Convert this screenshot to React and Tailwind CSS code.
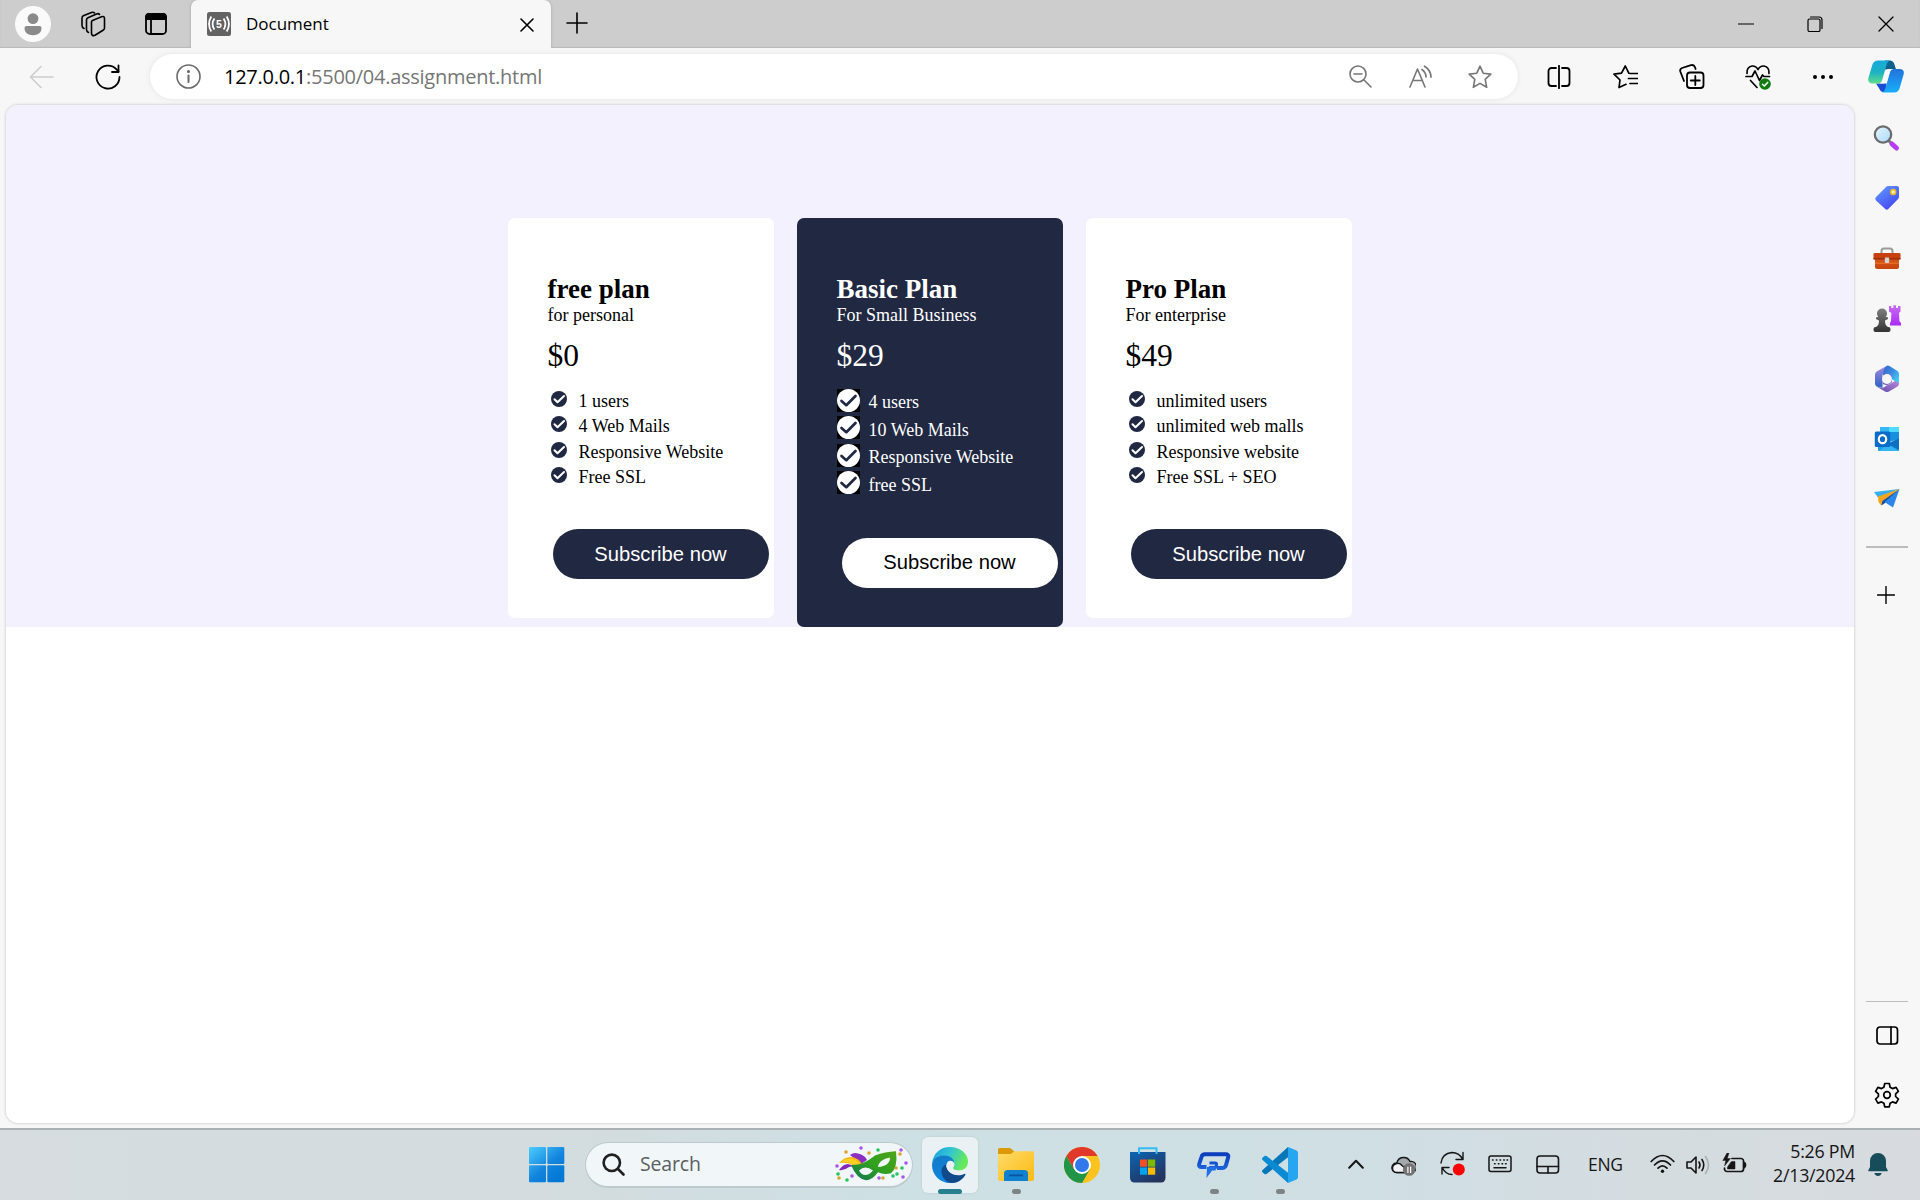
import React from "react";

const UI = "font-['Open_Sans','Noto_Sans',sans-serif]";

function Svg({ w = 24, h = 24, vb, children, className = "", sw = 1.6 }) {
  return (
    <svg width={w} height={h} viewBox={vb || `0 0 ${w} ${h}`} fill="none" stroke="currentColor" strokeWidth={sw} strokeLinecap="round" strokeLinejoin="round" className={"shrink-0 " + className}>
      {children}
    </svg>
  );
}

/* ---------- Title bar ---------- */

function TitleBar() {
  return (
    <div className="flex h-12 shrink-0 items-start bg-[#cdcdcd] shadow-[inset_0_-1px_1px_#b9b9b9]">
      <div className="flex h-12 w-[191px] shrink-0 items-center pl-[15px]">
        <svg width="36" height="36" viewBox="0 0 36 36" className="shrink-0">
          <circle cx="18" cy="18" r="18" fill="#fafafa" />
          <circle cx="18" cy="12.6" r="5.4" fill="#8a8a8a" />
          <path d="M9.500 22a2 2 0 0 1 2-2h13a2 2 0 0 1 2 2c0 5-4 7.200-8.500 7.200S9.500 27 9.500 22z" fill="#8a8a8a" />
        </svg>
        <Svg w={26} h={26} className="ml-[29px]" sw={1.600}>
          <path d="M12.500 9.500 21.500 5.800Q24.500 4.800 24.500 7.500V17Q24.500 18.500 23 19.300L15 24.300Q12 25.500 11.500 22.500V11Q11.500 10 12.500 9.500z" />
          <path d="M8.500 21.500Q6.500 20.500 6.500 18.500V9Q6.500 7.500 8 6.800L16.500 3Q18.500 2 19.500 3.500" />
          <path d="M4 17.500Q2 16.500 2 14.500V7Q2 5.500 3.300 4.800L11.500 1.500Q13.500 .7 14.500 2" />
        </Svg>
        <Svg w={22} h={22} className="ml-[39px]" sw={1.800}>
          <rect x="1" y="1" width="20" height="20" rx="3.500" />
          <path d="M1 6V4a3 3 0 0 1 3-3h14a3 3 0 0 1 3 3v2z" fill="currentColor" />
          <path d="M6 6v15" />
        </Svg>
      </div>
      <div className="flex h-12 w-[360px] shrink-0 items-center rounded-t-[7px] bg-[#f7f7f7] pl-4 shadow-[0_0_3px_#a5a5a5] [clip-path:inset(0_-4px_0_-4px)]">
        <svg width="24" height="24" viewBox="0 0 24 24" className="shrink-0">
          <rect width="24" height="24" rx="2.500" fill="#636363" />
          <g fill="none" stroke="#fff" strokeWidth="1.800">
            <path d="M4.300 4.500Q-.2 12 4.300 19.500M19.700 4.500Q24.200 12 19.700 19.500" />
            <path d="M7.400 6.500Q3.800 12 7.400 17.500M16.600 6.500Q20.200 12 16.600 17.500" />
          </g>
          <text x="12" y="15.500" textAnchor="middle" fontFamily="Liberation Sans" fontWeight="700" fontSize="10.500" fill="#fff">5</text>
        </svg>
        <span className={`${UI} ml-[15px] w-[274px] text-[17px] tracking-[-0.02px] text-black`}>Document</span>
        <Svg w={14} h={14} className="mt-0.5" sw={1.600}><path d="M1 1l12 12M13 1 1 13" /></Svg>
      </div>
      <Svg w={22} h={22} className="mt-3 ml-[15px]" sw={1.600}><path d="M11 1v20M1 11h20" /></Svg>
      <div className="ml-auto flex h-12 items-center gap-[53px] pr-[26px]">
        <Svg w={16} h={16} sw={1.200}><path d="M.5 8h15" /></Svg>
        <Svg w={16} h={16} sw={1.200}>
          <rect x="1" y="3" width="12" height="12.500" rx="1.500" />
          <path d="M3.500 1H12a3 3 0 0 1 3 3v8.500" />
        </Svg>
        <Svg w={16} h={16} className="ml-[2px]" sw={1.300}><path d="M1 1l14 14M15 1 1 15" /></Svg>
      </div>
    </div>
  );
}

/* ---------- Address bar ---------- */

function StarIcon({ className }) {
  return (
    <Svg w={24} h={24} className={className} sw={1.600}>
      <path d="M12 1.200l3.200 7 7.600.9-5.600 5.200 1.500 8-6.700-3.900-6.700 3.900 1.500-8L1.200 9.100l7.600-.9z" />
    </Svg>
  );
}

function Copilot() {
  return (
    <svg width="36" height="33" viewBox="0 0 36 33" className="shrink-0">
      <defs>
        <linearGradient id="cpA" x1="0" y1="0" x2="0" y2="1"><stop offset="0" stopColor="#17a9dc" /><stop offset=".5" stopColor="#1cb2c4" /><stop offset="1" stopColor="#5fdc8a" /></linearGradient>
        <linearGradient id="cpB" x1="0" y1="0" x2="0" y2="1"><stop offset="0" stopColor="#2373da" /><stop offset="1" stopColor="#18aefb" /></linearGradient>
      </defs>
      <path d="M17 .5h4.500q3.800 0 5 4l1.500 5H17z" fill="#0d5f8c" />
      <path d="M8 23.500h10.500l-1 8.500h-2q-3 0-4-3z" fill="#1b4cd8" />
      <path d="M10 .5h12.500q-3 .3-4 4.500l-4.300 15q-1 3.500-4.500 3.500H4.500Q-.8 23.500.4 18L4.300 5Q5.700.5 10 .5z" fill="url(#cpA)" />
      <path d="M26 9h5.500q5.300 0 4.100 5.500L31.700 28q-1.400 4.500-5.700 4.500H13.500q3-.3 4-4.500l4.300-15.500Q22.600 9 26 9z" fill="url(#cpB)" />
      <path d="M20 9h5q-2.500.5-3.300 3.500l-2.300 8q-.8 3-4 3h-3.500q2-.5 2.800-3.500l2.400-8Q17.900 9 20 9z" fill="#f7f9fb" />
    </svg>
  );
}

function AddressBar() {
  return (
    <div className="flex h-14 shrink-0 items-center pt-px pl-[29px]">
      <Svg w={25} h={24} className="text-[#cdcdcd]" sw={1.600}><path d="M24 12H1.500M12 1.500 1.500 12 12 22.500" /></Svg>
      <Svg w={26} h={26} className="ml-[41px]" sw={1.800}>
        <path d="M24.500 13A11.500 11.500 0 1 1 21.500 5.300L23.500 7.500" /><path d="M23.500 1.500v6.500H17" />
      </Svg>
      <div className="ml-[29px] flex h-[45px] w-[1368px] shrink-0 items-center rounded-full bg-white pl-[26px] shadow-[0_0_5px_#e2e2e2]">
        <Svg w={25} h={25} className="text-[#6b6b6b]" sw={1.600}>
          <circle cx="12.500" cy="12.500" r="11.500" /><path d="M12.500 11.500v6.500" strokeWidth="2" /><circle cx="12.500" cy="7.500" r=".8" fill="currentColor" />
        </Svg>
        <span className={`${UI} ml-[23px] whitespace-nowrap text-[20px] tracking-[-0.260px] text-[#767676]`}>
          <span className="text-black">127.0.0.1</span>:5500/04.assignment.html
        </span>
        <div className="ml-auto flex items-center pr-[26px] text-[#767676]">
          <Svg w={23} h={23} sw={1.600}><circle cx="9" cy="9" r="8" /><path d="M5 9h8M15 15l7 7" /></Svg>
          <Svg w={24} h={24} className="ml-[37px]" sw={1.600}>
            <path d="M1 22 8.500 4 16 22M3.800 15.500h9.500M13 4.500q4 3 4 7.500M15.500 1.200q6.500 4 6.500 11" />
          </Svg>
          <StarIcon className="ml-[35px]" />
        </div>
      </div>
      <div className="ml-[29px] flex items-center text-black">
        <Svg w={24} h={24} sw={1.800}><path d="M9 3H4.500A3 3 0 0 0 1.500 6v12a3 3 0 0 0 3 3H9M15 3h4.500a3 3 0 0 1 3 3v12a3 3 0 0 1-3 3H15M12 .8v22.400" /></Svg>
        <Svg w={25} h={24} className="ml-[42px]" sw={1.700}>
          <path d="M13 19.300 6 22.500l1-7.500L1 9.200l7.500-1L12.300 1l3.500 7.200M17 8.500h7.500M15.500 13.500h9M17 18.500h7.500" />
        </Svg>
        <Svg w={26} h={25} className="ml-[41px]" sw={1.800}>
          <rect x="8" y="8.500" width="16.500" height="15.500" rx="3" /><path d="M16.300 12v9M11.800 16.500h9" />
          <path d="M5 17 1.300 7.500Q.6 5 3 4L12 1.200q3-.8 4 2l.6 1.800" />
        </Svg>
        <Svg w={26} h={26} className="ml-[40px]" sw={1.700}>
          <path d="M2 9.500Q1.500 3 7 2q4-.3 6 3.500Q15 1.700 19 2q5.500 1 5 7.500M1 12.500h6l3-5.500 4.500 9.500 3-5.500 1.500 1.500h5.500M5.500 16.500l6.500 7" />
          <circle cx="20" cy="20" r="5.800" fill="#107c10" stroke="none" /><path d="m17.500 20.200 1.800 1.800 3.400-3.600" stroke="#fff" strokeWidth="1.500" />
        </Svg>
        <Svg w={22} h={6} className="ml-[41px]" sw={0}><g fill="currentColor"><circle cx="3" cy="3" r="2" /><circle cx="11" cy="3" r="2" /><circle cx="19" cy="3" r="2" /></g></Svg>
        <div className="ml-[34px]"><Copilot /></div>
      </div>
    </div>
  );
}

/* ---------- Pricing page ---------- */

const plans = [
  { name: "free plan", sub: "for personal", price: "$0", items: ["1 users", "4 Web Mails", "Responsive Website", "Free SSL"] },
  { name: "Basic Plan", sub: "For Small Business", price: "$29", items: ["4 users", "10 Web Mails", "Responsive Website", "free SSL"], dark: true },
  { name: "Pro Plan", sub: "For enterprise", price: "$49", items: ["unlimited users", "unlimited web malls", "Responsive website", "Free SSL + SEO"] },
];

function Check({ dark }) {
  if (dark)
    return (
      <svg width="23" height="23" viewBox="0 0 23 23" className="mt-[-3px] mr-[9px] shrink-0">
        <rect width="23" height="23" fill="#000" />
        <circle cx="11.500" cy="11.500" r="11.500" fill="#fff" />
        <path d="m4.500 12 4.800 4.200L18.500 7" fill="none" stroke="#212842" strokeWidth="2.700" strokeLinecap="round" strokeLinejoin="round" />
      </svg>
    );
  return (
    <svg width="16" height="16" viewBox="0 0 16 16" className="mt-[-5px] mr-3 ml-[3px] shrink-0">
      <circle cx="8" cy="8" r="8" fill="#212842" />
      <path d="m3.500 8.300 3 2.900L13 5" fill="none" stroke="#fff" strokeWidth="2.100" strokeLinecap="round" strokeLinejoin="round" />
    </svg>
  );
}

function Card({ plan }) {
  const d = plan.dark;
  return (
    <div className={`w-[266px] rounded-[7px] pt-[56px] pl-[39.500px] ${d ? "h-[409px] bg-[#212842] text-white" : "h-[400px] bg-white text-black"}`}>
      <h2 className="text-[27px] leading-[30px] font-bold">{plan.name}</h2>
      <p className="mt-px text-[18px] leading-[20px]">{plan.sub}</p>
      <p className="mt-[13px] text-[31.500px] leading-[36px]">{plan.price}</p>
      <ul className={d ? "mt-[14px]" : "mt-[15px]"}>
        {plan.items.map((t) => (
          <li key={t} className={`flex items-center text-[18px] whitespace-nowrap ${d ? "h-[27.500px]" : "h-[25.300px]"}`}>
            <Check dark={d} />
            <span className={d ? "mt-[2px]" : ""}>{t}</span>
          </li>
        ))}
      </ul>
      <button className={`ml-[5px] h-[50px] w-[216px] rounded-full font-['Liberation_Sans',Arial,sans-serif] text-[20.200px] ${d ? "mt-[40px] bg-white pb-[2px] text-black" : "mt-[39px] bg-[#212842] text-white"}`}>
        Subscribe now
      </button>
    </div>
  );
}

function Page() {
  return (
    <main className="h-[1018px] w-[1848px] overflow-hidden rounded-[12px] bg-white font-['Liberation_Serif','Times_New_Roman',serif] shadow-[0_0_3px_#b8b8b8]">
      <section className="flex h-[522px] items-start justify-center gap-[23px] bg-[#f3f1fe] pt-[113px]">
        {plans.map((p) => <Card key={p.name} plan={p} />)}
      </section>
    </main>
  );
}

/* ---------- Side bar ---------- */

function SearchColor() {
  return (
    <svg width="28" height="28" viewBox="0 0 28 28">
      <defs><linearGradient id="sg" x1="0" y1="0" x2="1" y2="1"><stop offset="0" stopColor="#e6f5fe" /><stop offset="1" stopColor="#a9dafa" /></linearGradient></defs>
      <path d="m15 16 3 3" stroke="#777" strokeWidth="3" />
      <path d="m19 20 4.500 4" stroke="#b53ff0" strokeWidth="5" strokeLinecap="round" />
      <circle cx="10" cy="10.500" r="8.200" fill="url(#sg)" stroke="#6b6b6b" strokeWidth="2.300" />
    </svg>
  );
}
function TagIcon() {
  return (
    <svg width="28" height="28" viewBox="0 0 28 28">
      <defs><linearGradient id="tg" x1="0" y1="0" x2=".7" y2="1"><stop offset="0" stopColor="#62a0fc" /><stop offset="1" stopColor="#4446f5" /></linearGradient></defs>
      <path d="M15 2h9a2 2 0 0 1 2 2v9a3 3 0 0 1-.9 2L15.500 24.800a2.500 2.500 0 0 1-3.500 0L3 16.500a2.500 2.500 0 0 1 0-3.500L13 2.900a3 3 0 0 1 2-.9z" fill="url(#tg)" />
      <circle cx="20.200" cy="8" r="2.400" fill="#f3f0e5" stroke="#f3bd13" strokeWidth="1.600" />
    </svg>
  );
}
function ToolboxIcon() {
  return (
    <svg width="28" height="24" viewBox="0 0 28 24">
      <defs><linearGradient id="bx" x1="0" y1="0" x2="0" y2="1"><stop offset="0" stopColor="#d8571a" /><stop offset="1" stopColor="#c7430f" /></linearGradient></defs>
      <path d="M8.500 8V5q0-2.500 2.500-2.500h6q2.500 0 2.500 2.500v3" fill="none" stroke="#9b9b9b" strokeWidth="2" />
      <path d="M2 12h24v9a2 2 0 0 1-2 2H4a2 2 0 0 1-2-2z" fill="url(#bx)" />
      <path d="M2 16.500h24v1.500H2z" fill="#e66a28" />
      <rect x=".5" y="7" width="27" height="6.500" rx="1.300" fill="#c8400f" /><rect x=".5" y="12" width="27" height="1.500" fill="#98310c" />
      <rect x="11.800" y="11.500" width="4.400" height="5.500" rx="1.200" fill="#d4d4d4" />
    </svg>
  );
}
function GamesIcon() {
  return (
    <svg width="28" height="28" viewBox="0 0 28 28">
      <defs>
        <linearGradient id="rk" x1="0" y1="0" x2="0" y2="1"><stop offset="0" stopColor="#c96bf6" /><stop offset="1" stopColor="#a92cf3" /></linearGradient>
        <linearGradient id="pw" gradientUnits="userSpaceOnUse" x1="0" y1="3" x2="0" y2="28"><stop offset="0" stopColor="#808080" /><stop offset="1" stopColor="#303030" /></linearGradient>
      </defs>
      <path d="M16 1h2.300v2h2V.3h2.700V3h2V1h2.500v5.500L26 8l.4 8 1.600 2v2.500H17V18l1-2 .4-8-2.400-1.500z" fill="url(#rk)" />
      <g fill="url(#pw)"><circle cx="9" cy="8.500" r="5" /><path d="M3 12.500q6-2.500 12 0v1.500l-3 1.500q0 5 3 6.500v1H3v-1q3-1.500 3-6.500L3 14z" /><rect x=".5" y="22" width="17" height="5" rx="2" /></g>
    </svg>
  );
}
function M365Icon() {
  return (
    <svg width="26" height="28" viewBox="0 0 26 28">
      <defs>
        <linearGradient id="mA" x1="0" y1="0" x2="1" y2=".8"><stop offset="0" stopColor="#3466c8" /><stop offset=".5" stopColor="#3a8ae0" /><stop offset="1" stopColor="#45cdf5" /></linearGradient>
        <linearGradient id="mB" x1="0" y1="0" x2="0" y2="1"><stop offset="0" stopColor="#a98be0" /><stop offset=".6" stopColor="#5b72d0" /><stop offset="1" stopColor="#2a63c4" /></linearGradient>
        <linearGradient id="mC" x1="1" y1="0" x2="0" y2="1"><stop offset="0" stopColor="#c28bdc" /><stop offset="1" stopColor="#5d49ab" /></linearGradient>
      </defs>
      <path d="M13 .8 3 6.300Q1 7.500 1 9.500v9q0 2 1.800 3L8.500 23V9.500L14 6z" fill="url(#mB)" />
      <path d="m2 21.300 9 5.200q2 1 4 0l8.500-5q1.500-1 1.500-2.700L24 14l-7 4.500-4 2-5 2.800z" fill="url(#mC)" />
      <path d="M9 10q0-7 4-9.300 1.200-.4 2.500.3L23.500 6Q25 7 25 8.800v9.500l-7.500-4.300z" fill="url(#mA)" />
      <path d="M9.500 10.500 8.500 19l4.500 1.500 5-3V10.500L13 8z" fill="#7b6ccb" />
      <circle cx="13" cy="14" r="4.900" fill="#f7f7f7" />
    </svg>
  );
}
function OutlookIcon() {
  return (
    <svg width="26" height="26" viewBox="0 0 26 26">
      <path d="M6 2a1 1 0 0 1 1-1h17a1 1 0 0 1 1 1v11H6z" fill="#28a8ea" />
      <path d="M6 1h9v5H6z" fill="#35b8f1" /><path d="M15 1h10v5H15z" fill="#50d9ff" />
      <path d="M15 6h10v7l-10 3z" fill="#1490df" />
      <path d="M4 13l11 4 10-5v12a1 1 0 0 1-1 1H5a1 1 0 0 1-1-1z" fill="#1a9ce6" />
      <path d="m14 18 11-6v12z" fill="#0f6fc0" /><path d="m13 18 12 7H5z" fill="#34b4f0" />
      <rect x=".8" y="5.500" width="15.500" height="15.500" rx="1.500" fill="#0a6cc8" />
      <ellipse cx="8.500" cy="13.200" rx="3.700" ry="4" fill="none" stroke="#fff" strokeWidth="2.200" />
    </svg>
  );
}
function PlaneIcon() {
  return (
    <svg width="28" height="24" viewBox="0 0 28 24">
      <path d="M1 5 26.500 2 5 10.500z" fill="#36b0f0" />
      <path d="M5 9.500 26.500 2 8 18.500 5.500 15z" fill="#f3a51f" />
      <path d="M8.500 18.500 9.500 14 26.500 2 12 16z" fill="#0c4fa8" />
      <path d="M26.500 2 20 20.500 11.500 15z" fill="#2c86ec" />
    </svg>
  );
}

function SideSlot({ children }) {
  return <div className="flex h-[60.200px] shrink-0 items-center justify-center">{children}</div>;
}

function SideBar() {
  return (
    <aside className="flex h-[1023px] w-[66px] flex-col pt-[3px] text-black">
      <SideSlot><SearchColor /></SideSlot>
      <SideSlot><TagIcon /></SideSlot>
      <SideSlot><ToolboxIcon /></SideSlot>
      <SideSlot><GamesIcon /></SideSlot>
      <SideSlot><M365Icon /></SideSlot>
      <SideSlot><OutlookIcon /></SideSlot>
      <SideSlot><PlaneIcon /></SideSlot>
      <div className="mt-[17px] ml-3 h-[2px] w-[42px] shrink-0 bg-[#bdbdbd]" />
      <Svg w={18} h={18} className="mt-[38px] ml-[23px]" sw={1.400}><path d="M9 .5v17M.5 9h17" /></Svg>
      <div className="mt-auto ml-3 h-px w-[42px] bg-[#bdbdbd]" />
      <Svg w={23} h={19} className="mt-[24px] ml-[22px]" sw={1.700}><rect x="1" y="1" width="20.500" height="17" rx="3" /><path d="M15 1v17" /></Svg>
      <Svg w={26} h={26} className="mt-[37px] mb-[20px] ml-5" sw={1.700}>
        <circle cx="13" cy="13" r="3.300" />
        <path d="M10.700 1.500h4.600l.8 3.700 2.400 1.400 3.600-1.200 2.300 4-2.800 2.500v2.600l2.800 2.600-2.300 4-3.600-1.200-2.400 1.400-.8 3.500h-4.600l-.8-3.500-2.400-1.400-3.600 1.200-2.300-4 2.800-2.600v-2.600L1.600 9.400l2.300-4 3.600 1.200 2.400-1.400z" />
      </Svg>
    </aside>
  );
}

/* ---------- Task bar ---------- */

function WindowsIcon() {
  return (
    <svg width="36" height="36" viewBox="0 0 36 36" className="shrink-0">
      <defs><linearGradient id="wn" gradientUnits="userSpaceOnUse" x1="0" y1="0" x2="28" y2="34"><stop offset="0" stopColor="#4ccdff" /><stop offset=".6" stopColor="#1284dd" /><stop offset="1" stopColor="#0078d4" /></linearGradient></defs>
      <g fill="url(#wn)"><rect width="17" height="17" rx="1" /><rect x="18.300" width="17" height="17" rx="1" /><rect y="18.300" width="17" height="17" rx="1" /><rect x="18.300" y="18.300" width="17" height="17" rx="1" /></g>
    </svg>
  );
}

const confetti = [
  [26, 2, "#a855e8"], [11, 6, "#dba52b"], [34, 7, "#dba52b"], [43, 4, "#22c55e"], [66, 4, "#a855e8"], [65, 8, "#dba52b"], [71, 17, "#a855e8"],
  [2, 20, "#a855e8"], [3, 28, "#22c55e"], [4, 32, "#dba52b"], [12, 34, "#22c55e"], [17, 30, "#a855e8"], [44, 32, "#a855e8"], [48, 32, "#dba52b"],
  [58, 30, "#22c55e"], [62, 28, "#22c55e"], [67, 22, "#22c55e"], [61, 22, "#dba52b"], [68, 31, "#a855e8"],
];

function MaskIcon() {
  return (
    <svg width="74" height="37" viewBox="0 0 74 37" className="shrink-0">
      <defs><linearGradient id="mk" x1="0" y1="1" x2="1" y2="0"><stop offset="0" stopColor="#0e7455" /><stop offset=".5" stopColor="#2fa01f" /><stop offset="1" stopColor="#4da51b" /></linearGradient></defs>
      {confetti.map(([x, y, c], i) => <circle key={i} cx={x} cy={y} r="1.800" fill={c} />)}
      <path d="M15 9q4-3 8-1.500 7 1.500 9 6.500l-6 4z" fill="#8b2fc0" />
      <path d="M4 24q4-6 9-6l6 2-5 1q-5 4-10 3z" fill="#8428b8" />
      <path d="M4 17q5-6 12-6 8 1 11 7l-8 2Q14 16 4 17z" fill="#f8b511" />
      <path d="M13 13q6-1 10 3l3 4-7-1q-6-4-13-3 3-3 7-3z" fill="#ffcf22" />
      <path fillRule="evenodd" d="M16 19q9 0 15-3.500 4-2 9-6 10-4 21-4.300 2 16-5 22-7 2-13-1-6 8-12 8-9-1-15-15.200zm8 5.500q6-6 14 0-4 4.500-7.500 4.500-4 0-6.500-4.500zm19-3.500q1-7.500 12-9.500 0 8.500-12 9.500z" fill="url(#mk)" />
    </svg>
  );
}

function EdgeIcon() {
  return (
    <svg width="36" height="36" viewBox="0 0 36 36">
      <defs>
        <linearGradient id="e1" x1="0" y1="0" x2="1" y2=".35"><stop offset="0" stopColor="#199ce0" /><stop offset=".5" stopColor="#30c4d4" /><stop offset="1" stopColor="#66ea5b" /></linearGradient>
        <linearGradient id="e2" x1="0" y1="0" x2=".4" y2="1"><stop offset="0" stopColor="#1578c4" /><stop offset="1" stopColor="#0f86e2" /></linearGradient>
      </defs>
      <path d="M0 17C1 6 8.500 0 18 0c10 0 18 6.500 18 14.500 0 6-4.500 9-9 9-3.500 0-6-1-6-2.500 0-1 1.300-1.500 1.300-4 0-3.500-4-6.500-9-6.500C6 10.500 1 13 0 17z" fill="url(#e1)" />
      <path d="M0 18C.5 12 6 8.500 12 8.500c6 0 10.300 3.500 10.300 8C21 14 15 14 14 20c-1 7 4 15 10 15-2 .8-4 1-6 1C8 36 0 28 0 18z" fill="url(#e2)" />
      <path d="M14 17.500c-2.800 1-5 4-4.500 8C10 31 15 36 20 36c6 0 10.500-3.500 13.300-8 .4-.8-.2-1.500-1-1-2 1-4 1.300-6 1.300-7 0-12-4.500-12.300-10.800z" fill="#114a8b" />
      <path d="M18.300 13.800c2.500 0 4 1.500 4 3.600 0 2-1.300 2.600-1.300 3.700 0 1.500 2.500 2.700 6 2.700 2.500 0 4.500-.6 6-1.300-1.500 3.500-5 5-8.500 4.700-6-.6-10-4.400-10-8.800 0-2.600 1.500-4.600 3.800-4.600z" fill="#e9f1f4" />
    </svg>
  );
}
function FolderIcon() {
  return (
    <svg width="36" height="34" viewBox="0 0 36 34">
      <defs><linearGradient id="fo" x1="0" y1="0" x2="1" y2="1"><stop offset="0" stopColor="#ffdc6a" /><stop offset="1" stopColor="#fbb913" /></linearGradient></defs>
      <path d="M0 1.500A1.500 1.500 0 0 1 1.500 0h10q1 0 1.800.8L16 3.200V8H0z" fill="#dd9a08" />
      <path d="M0 6h12q1.500 0 2.500-1.200T17 3.200h17.500A1.500 1.500 0 0 1 36 4.700V31a2 2 0 0 1-2 2H2a2 2 0 0 1-2-2z" fill="url(#fo)" />
      <path d="M6 33v-7.500q0-3.500 3.500-3.500h17q3.500 0 3.500 3.500V33z" fill="#1180cf" /><rect x="11" y="26.500" width="14" height="1.800" rx=".9" fill="#0b559d" />
    </svg>
  );
}
function ChromeIcon() {
  return (
    <svg width="36" height="36" viewBox="0 0 36 36">
      <circle cx="18" cy="18" r="18" fill="#fcc31e" />
      <path d="M2.400 9A18 18 0 0 1 33.600 9H18L10.200 22.500z" fill="#e2372b" />
      <path d="M2.400 9A18 18 0 0 0 18 36l7.800-13.500L18 24l-7.800-1.500z" fill="#219547" />
      <circle cx="18" cy="18" r="9" fill="#fff" /><circle cx="18" cy="18" r="7" fill="#3078ec" />
    </svg>
  );
}
function StoreIcon() {
  return (
    <svg width="36" height="36" viewBox="0 0 36 36">
      <defs><linearGradient id="st" x1="0" y1="0" x2=".6" y2="1"><stop offset="0" stopColor="#0c65b4" /><stop offset="1" stopColor="#24345f" /></linearGradient></defs>
      <path d="M0 5h35.500v26a4.500 4.500 0 0 1-4.500 4.500H4.500A4.500 4.500 0 0 1 0 31z" fill="url(#st)" />
      <path d="M9 7V1.200h17.500V7" fill="none" stroke="#32bdf2" strokeWidth="2" strokeLinejoin="round" />
      <path fill="#f25022" d="M10 12.500h7.200v7.200H10z" /><path fill="#7fba00" d="M18 12.500h7.200v7.200H18z" /><path fill="#00a4ef" d="M10 20.500h7.200v7.200H10z" /><path fill="#ffb900" d="M18 20.500h7.200v7.200H18z" />
    </svg>
  );
}
function ChatPIcon() {
  return (
    <svg width="36" height="28" viewBox="0 0 36 28">
      <defs><linearGradient id="cp" gradientUnits="userSpaceOnUse" x1="0" y1="0" x2="0" y2="27"><stop offset="0" stopColor="#0a36b8" /><stop offset=".4" stopColor="#1250cc" /><stop offset="1" stopColor="#2a7df0" /></linearGradient></defs>
      <g fill="none" stroke="url(#cp)" strokeLinejoin="round">
        <path d="M10.500 16H5.500q-3 0-2.300-3L5.500 6Q6.300 3.300 9 3.300h20.500q3.500 0 2.700 3L30 14q-.8 3-4 3h-5" strokeWidth="4" />
        <path d="M13.500 12h5.500q2 0 1.500 2l-.8 2.500H14l-1.500 6" strokeWidth="3" />
      </g>
      <path d="M11 16h9.500l-1 3.500h-3.500L10.500 27z" fill="#2270e6" />
    </svg>
  );
}
function VsCodeIcon() {
  return (
    <svg width="36" height="36" viewBox="0 0 36 36">
      <path d="M26 0 .3 23.300q-.6 1 .2 1.900l2 1.700q1 .6 2 0L27 9.500z" fill="#0877b9" />
      <path d="M26 36 .3 12.700q-.6-1 .2-1.900l2-1.700q1-.6 2 0L27 26.500z" fill="#0a8ad2" />
      <path d="M26 0l8.500 3.600Q36 4.300 36 6v24q0 1.600-1.500 2.400L26 36z" fill="#26a5f1" />
    </svg>
  );
}

function AppSlot({ children, active, running }) {
  return (
    <div className={`relative flex h-14 w-14 shrink-0 items-center justify-center rounded-[6px] ${active ? "bg-[#e9f1f4] shadow-[0_0_2px_#b3c2c6]" : ""}`}>
      {children}
      {active && <span className="absolute bottom-[-1px] h-[5px] w-6 rounded-full bg-[#26808f]" />}
      {running && <span className="absolute bottom-[-1px] h-[5px] w-[9px] rounded-full bg-[#7c8486]" />}
    </div>
  );
}

function Tray() {
  return (
    <div className="ml-auto flex items-center pr-8 text-[#151515]">
      <Svg w={16} h={10} className="mt-[-2px]" sw={2}><path d="m1.200 8.800 6.800-7 6.800 7" /></Svg>
      <Svg w={25} h={22} className="ml-[27px]" sw={1.400}>
        <path d="M5.500 18.500a4.700 4.700 0 0 1 .3-9.500A7 7 0 0 1 19 7.500a5.500 5.500 0 0 1 4 10L17 18.500z" fill="#a5a9ab" />
        <path d="M5.500 18.500Q1.500 18 1.500 14q.5-4 4.500-4.500 3-.5 5 2l8 7z" fill="#f1f3f4" />
        <circle cx="18.200" cy="15.500" r="6.300" fill="#737373" stroke="none" /><path d="M16.900 13v5.400M19.600 13v5.400" stroke="#fff" strokeWidth="1.200" />
      </Svg>
      <Svg w={25} h={25} className="mt-[-2px] ml-6" sw={1.400}>
        <path d="M1 12Q2 2.500 12 1.500q7 0 10.500 6.500M23 1.500v7h-7M2 23v-6.500h7M2.500 17q3 6.500 9.500 6.500" />
        <circle cx="18.800" cy="18.500" r="6" fill="#fe0000" stroke="none" />
      </Svg>
      <Svg w={24} h={18} className="mt-[-1px] ml-[23px]" sw={1.500}>
        <rect x="1" y="1" width="22" height="15.500" rx="2" /><path d="M4.500 5h.6M8.300 5h.6M12 5h.6M15.700 5h.6M19 5h.6M6.500 8.800h.6M10.300 8.800h.6M14 8.800h.6M17.500 8.800h.6M6 12.800h12" />
      </Svg>
      <Svg w={24} h={19} className="ml-6" sw={1.600}><rect x="1" y="1" width="21.500" height="17" rx="3" /><path d="M1 11.500h21.500M12 11.500V18" /></Svg>
      <span className={`${UI} ml-[28px] w-[36px] text-[17.500px] tracking-[-0.3px] whitespace-nowrap`}>ENG</span>
      <Svg w={25} h={20} className="mt-[-2px] ml-[26px]" sw={1.700}>
        <path d="M1.200 7.500Q12.500-4.500 23.800 7.500M4.500 11q8-8.300 16 0M8 14.200q4.500-4.600 9 0" /><circle cx="12.500" cy="17.300" r="1.700" fill="currentColor" stroke="none" />
      </Svg>
      <Svg w={25} h={22} className="ml-[11px]" sw={1.600}>
        <path d="M1 8h4l5-5v16l-5-5H1zM13 8q2 3 0 6" /><path d="M16 5.500q3.500 5.500 0 11" /><path d="M19.500 2.500q6 8.500 0 17" stroke="#a9aeb0" />
      </Svg>
      <Svg w={25} h={22} className="mt-[-2px] ml-[11px]" sw={1.700}>
        <path d="M10 5.500h9a2.500 2.500 0 0 1 2.500 2.500v8a2.500 2.500 0 0 1-2.500 2.500H5A2.500 2.500 0 0 1 2.500 16v-1" /><path d="M22.500 9.500q2 2.500 0 5z" fill="currentColor" /><path d="M10 8.500h3V16H5.500v-2L9 9z" fill="currentColor" strokeWidth=".5" /><path d="M5 0 .8 7.500h3L2.500 13 8.500 5.500H5.300L7 0z" fill="currentColor" strokeWidth=".4" />
      </Svg>
      <div className={`${UI} mt-[-3px] ml-[22px] w-[86px] text-right text-[17.800px] leading-6 tracking-[-0.250px] whitespace-nowrap`}>
        <div>5:26 PM</div>
        <div>2/13/2024</div>
      </div>
      <svg width="20" height="23" viewBox="0 0 20 23" className="ml-[13px] shrink-0">
        <path d="M10 0a8 8 0 0 1 8 8v6l1.800 3.500q.3.800-.6.800H.8q-.9 0-.6-.8L2 14V8a8 8 0 0 1 8-8zM6.300 20h7.400q-1 3-3.700 3t-3.700-3z" fill="#174c5b" />
      </svg>
    </div>
  );
}

function TaskBar() {
  return (
    <div className="flex h-[72px] shrink-0 items-center border-t-2 border-[#a9b1b4] bg-[linear-gradient(90deg,#d6dcdf_0%,#d3dcdf_30%,#cde0e4_48%,#cfdfe4_70%,#d4dce0_85%,#d7dbdf_100%)] pb-px pl-[529px]">
      <WindowsIcon />
      <div className="ml-[20px] flex h-[46px] w-[328px] shrink-0 items-center rounded-full border border-b-2 border-[#bcc9cd] bg-[#f1f6f8] pl-4">
        <Svg w={23} h={23} className="text-[#202020]" sw={2.600}><circle cx="9.800" cy="9.800" r="8.200" /><path d="m16 16 5.500 5.500" /></Svg>
        <span className={`${UI} ml-[15px] w-[195px] text-[19.500px] tracking-[-0.150px] text-[#5b5f61]`}>Search</span>
        <MaskIcon />
      </div>
      <div className="ml-[9px] flex gap-[10px]">
        <AppSlot active><EdgeIcon /></AppSlot>
        <AppSlot running><FolderIcon /></AppSlot>
        <AppSlot><ChromeIcon /></AppSlot>
        <AppSlot><StoreIcon /></AppSlot>
        <AppSlot running><ChatPIcon /></AppSlot>
        <AppSlot running><VsCodeIcon /></AppSlot>
      </div>
      <Tray />
    </div>
  );
}

export default function App() {
  return (
    <div className="flex h-[1200px] w-[1920px] flex-col overflow-hidden bg-[#f7f7f7]">
      <TitleBar />
      <AddressBar />
      <div className="flex h-[1024px] shrink-0 pt-px pl-[6px]">
        <Page />
        <SideBar />
      </div>
      <TaskBar />
    </div>
  );
}
